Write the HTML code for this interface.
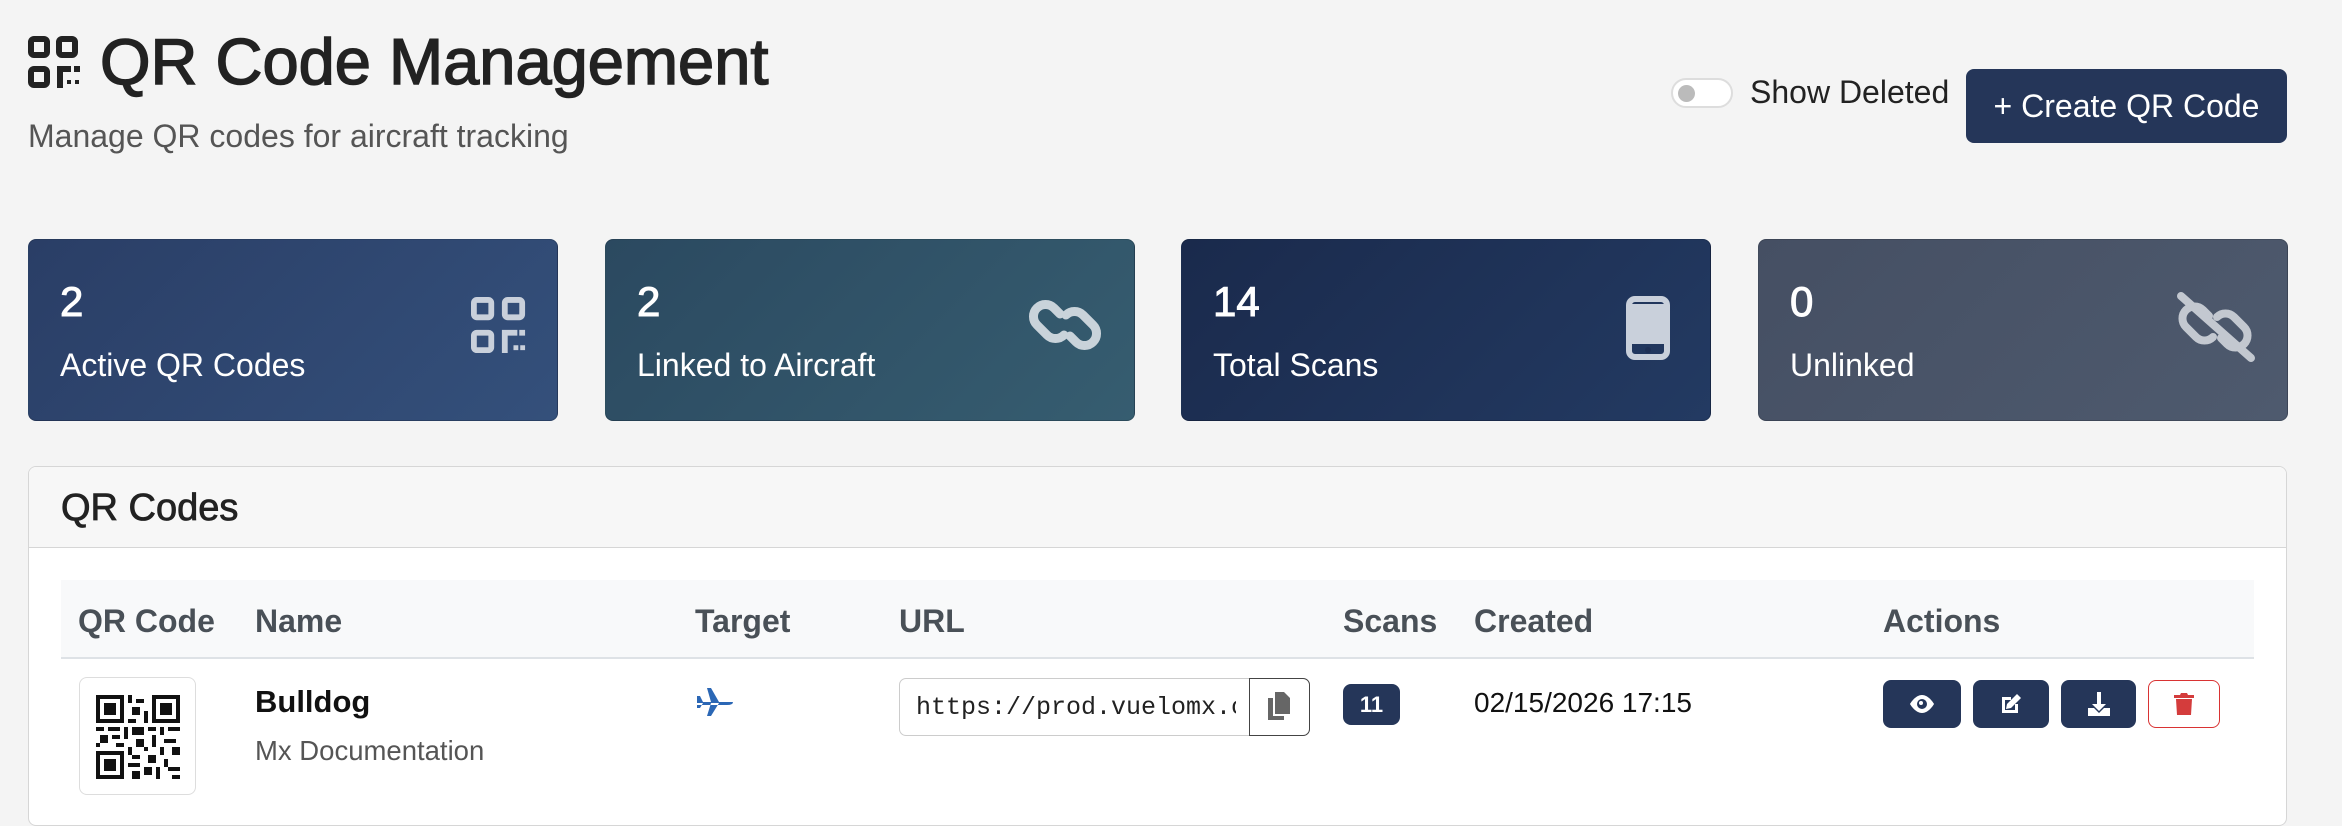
<!DOCTYPE html>
<html><head><meta charset="utf-8"><style>
*{box-sizing:border-box;margin:0;padding:0}
body{width:2342px;height:802px;background:#f4f4f4;font-family:"Liberation Sans",sans-serif;position:relative;overflow:hidden;color:#212529}
.a{position:absolute}
.card{position:absolute;top:239px;height:182px;width:530px;border-radius:8px;color:#fff;border:1px solid rgba(0,0,0,.15)}
.card .num{position:absolute;left:31px;top:38px;font-size:42px;-webkit-text-stroke:1px #fff}
.card .lbl{position:absolute;left:31px;top:107px;font-size:32px}
.card svg{position:absolute;right:30px;top:56px}
.th{position:absolute;top:603px;font-size:32px;font-weight:bold;color:#495057}
.btn{position:absolute;top:680px;height:48px;border-radius:8px;background:#253659;display:flex;align-items:center;justify-content:center}
</style></head><body>
<svg class="a" style="left:28px;top:36px" width="58" height="52" viewBox="0 0 58 52">
<g fill="none" stroke="#222" stroke-width="6"><rect x="3" y="3" width="16" height="16" rx="3"/><rect x="31" y="3" width="16" height="16" rx="3"/><rect x="3" y="33" width="16" height="16" rx="3"/></g>
<path d="M29 30h14v6h-8v16h-6zM46 30h6v6h-6z" fill="#222"/><rect x="39" y="44" width="4" height="4" fill="#222"/><rect x="47" y="44" width="4" height="4" fill="#222"/></svg>
<div class="a" style="left:100px;top:24px;font-size:65px;color:#222;-webkit-text-stroke:1.5px #222">QR Code Management</div>
<div class="a" style="left:28px;top:118px;font-size:32px;color:#555">Manage QR codes for aircraft tracking</div>
<div class="a" style="left:1671px;top:78px;width:62px;height:30px;border-radius:15px;border:2px solid #ddd;background:#fff"><div style="position:absolute;left:5px;top:5px;width:17px;height:17px;border-radius:50%;background:#bbb"></div></div>
<div class="a" style="left:1750px;top:74px;font-size:32px;color:#222">Show Deleted</div>
<div class="a" style="left:1966px;top:69px;width:321px;height:74px;border-radius:8px;background:#253659;color:#fff;font-size:32px;display:flex;align-items:center;justify-content:center">+ Create QR Code</div>

<div class="card" style="left:28px;background:linear-gradient(135deg,#2a3e66,#34507b)"><div class="num">2</div><div class="lbl">Active QR Codes</div>
<svg width="56" height="60" viewBox="0 0 58 60"><g fill="none" stroke="#c9d0db" stroke-width="6"><rect x="3" y="3" width="18" height="18" rx="3"/><rect x="35" y="3" width="18" height="18" rx="3"/><rect x="3" y="37" width="18" height="18" rx="3"/></g><path d="M32 34h16v6h-10v18h-6zM50 34h6v6h-6zM44 50h5v5h-5zM51 50h5v5h-5z" fill="#c9d0db"/></svg></div>
<div class="card" style="left:605px;background:linear-gradient(135deg,#2b4960,#365d70)"><div class="num">2</div><div class="lbl">Linked to Aircraft</div>
<svg width="78" height="66" viewBox="0 0 78 66" style="right:30px;top:52px"><g fill="none" stroke="#c9d3da" stroke-width="9" stroke-linecap="round"><path d="M34 22l-6-6a12 12 0 0 0-17 17l10 10a12 12 0 0 0 17 0"/><path d="M44 44l6 6a12 12 0 0 0 17-17l-10-10a12 12 0 0 0-17 0"/></g></svg></div>
<div class="card" style="left:1181px;background:linear-gradient(135deg,#1a2a4c,#233a62)"><div class="num">14</div><div class="lbl">Total Scans</div>
<svg width="44" height="64" viewBox="0 0 44 64" style="right:40px;top:56px"><rect x="3" y="3" width="38" height="58" rx="6" fill="none" stroke="#c9d0db" stroke-width="6"/><rect x="6" y="8" width="32" height="40" fill="#c9d0db"/><circle cx="22" cy="54" r="3" fill="#1e3055"/></svg></div>
<div class="card" style="left:1758px;background:linear-gradient(135deg,#454f63,#4e5a6e)"><div class="num">0</div><div class="lbl">Unlinked</div>
<svg width="82" height="70" viewBox="0 0 82 70" style="right:30px;top:52px"><g fill="none" stroke="#c3c8d0" stroke-width="8" stroke-linecap="round"><path d="M34 24l-6-6a12 12 0 0 0-17 17l10 10a12 12 0 0 0 17 0"/><path d="M46 46l6 6a12 12 0 0 0 17-17l-10-10a12 12 0 0 0-17 0"/><path d="M6 4l70 62"/></g></svg></div>

<div class="a" style="left:28px;top:466px;width:2259px;height:360px;background:#fff;border:1px solid #d6d6d6;border-radius:8px;overflow:hidden">
<div style="height:81px;background:#f7f7f7;border-bottom:1px solid #d6d6d6"></div></div>
<div class="a" style="left:61px;top:487px;font-size:38px;color:#222;-webkit-text-stroke:0.8px #222">QR Codes</div>
<div class="a" style="left:61px;top:580px;width:2193px;height:79px;background:#f8f9fa;border-bottom:2px solid #dee2e6"></div>
<div class="th" style="left:78px">QR Code</div><div class="th" style="left:255px">Name</div><div class="th" style="left:695px">Target</div><div class="th" style="left:899px">URL</div><div class="th" style="left:1343px">Scans</div><div class="th" style="left:1474px">Created</div><div class="th" style="left:1883px">Actions</div>

<div class="a" style="left:79px;top:677px;width:117px;height:118px;border:1px solid #ddd;border-radius:8px;background:#fff"></div>
<svg class="a" style="left:96px;top:695px" width="84" height="84" viewBox="0 0 21 21" shape-rendering="crispEdges"><g fill="#111"><path d="M0 0h7v7H0zM14 0h7v7h-7zM0 14h7v7H0z"/></g><g fill="#fff"><path d="M1 1h5v5H1zM15 1h5v5h-5zM1 15h5v5H1z"/></g><g fill="#111"><path d="M2 2h3v3H2zM16 2h3v3h-3zM2 16h3v3H2zM8 0h1v2H8zM10 1h2v1h-2zM9 3h2v2H9zM12 4h1v3h-1zM8 6h2v1H8zM0 8h2v1H0zM3 8h3v1H3zM7 8h1v3H7zM9 8h3v2H9zM13 8h2v1h-2zM16 8h1v2h-1zM18 8h3v1h-3zM1 10h2v2H1zM4 10h2v1H4zM10 11h2v2h-2zM14 10h1v3h-1zM17 11h3v1h-3zM0 12h1v1H0zM5 12h2v1H5zM8 13h1v2H8zM12 13h1v1h-1zM16 13h1v2h-1zM19 13h2v2h-2zM9 15h2v1H9zM13 15h2v2h-2zM8 17h3v1H8zM17 16h1v2h-1zM12 18h2v2h-2zM15 18h1v3h-1zM18 18h3v1h-3zM9 19h2v2H9zM19 20h2v1h-2z"/></g></svg>
<div class="a" style="left:255px;top:684px;font-size:31px;font-weight:bold;color:#111">Bulldog</div>
<div class="a" style="left:255px;top:735px;font-size:27.5px;color:#555">Mx Documentation</div>
<svg class="a" style="left:695px;top:686px" width="40" height="32" viewBox="0 0 40 32"><path d="M2 16h30q6 0 6 0q0 3-6 3H2z M12 2h4l8 14h-8zM12 30h4l8-13h-8zM2 10h3l3 6H2zM2 22h3l3-5H2z" fill="#2b67b5"/></svg>
<div class="a" style="left:899px;top:678px;width:411px;height:58px;border:1px solid #ccc;border-radius:7px;background:#fff"></div>
<div class="a" style="left:916px;top:693px;font-family:'Liberation Mono',monospace;font-size:25px;color:#222;width:320px;overflow:hidden;white-space:nowrap">https://prod.vuelomx.c</div>
<div class="a" style="left:1249px;top:678px;width:61px;height:58px;border:1.5px solid #444;border-radius:0 7px 7px 0;background:#fff"></div>
<svg class="a" style="left:1268px;top:692px" width="22" height="28" viewBox="0 0 22 28"><path d="M7 0h9l6 6v16H7z" fill="#666"/><path d="M0 6h5v18h11v4H0z" fill="#666"/></svg>
<div class="a" style="left:1343px;top:684px;width:57px;height:41px;border-radius:8px;background:#253659;color:#fff;font-size:22px;font-weight:bold;display:flex;align-items:center;justify-content:center">11</div>
<div class="a" style="left:1474px;top:687px;font-size:28px;color:#111">02/15/2026 17:15</div>
<div class="btn" style="left:1883px;width:78px"><svg width="28" height="22" viewBox="0 0 28 22"><path d="M14 2C7 2 2 11 2 11s5 9 12 9 12-9 12-9-5-9-12-9z" fill="#fff"/><circle cx="14" cy="11" r="5" fill="#253659"/><circle cx="13" cy="10" r="2" fill="#fff"/></svg></div>
<div class="btn" style="left:1973px;width:76px"><svg width="24" height="24" viewBox="0 0 24 24"><path d="M3 5h9v3H6v10h10v-6h3v9H3z" fill="#fff"/><path d="M18 2l4 4-10 10-5 1 1-5z" fill="#fff"/></svg></div>
<div class="btn" style="left:2061px;width:75px"><svg width="24" height="26" viewBox="0 0 24 26"><path d="M10 1h4v12h5l-7 7-7-7h5z" fill="#fff"/><path d="M1 17h6l5 5 5-5h6v8H1z" fill="#fff"/></svg></div>
<div class="btn" style="left:2148px;width:72px;background:#fff;border:1.5px solid #d93333"><svg width="20" height="24" viewBox="0 0 20 24"><path d="M0 3h6l1-2h6l1 2h6v3H0zM2 7h16l-1 16H3z" fill="#d43c3c"/></svg></div>
</body></html>
